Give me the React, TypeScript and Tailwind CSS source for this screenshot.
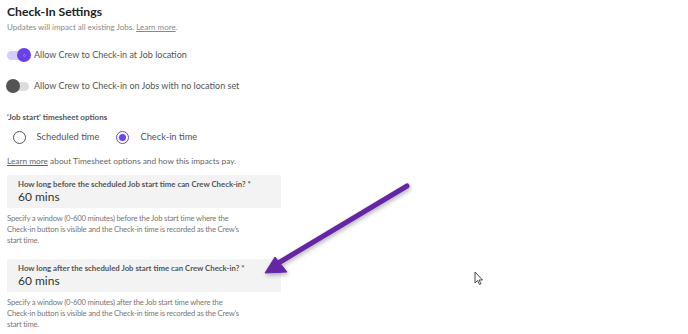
import React from 'react';

function Toggle({ on }: { on: boolean }) {
  return (
    <div className="relative w-[24px] h-[14px] shrink-0">
      <div
        className={`absolute left-0 right-[2px] top-[2.5px] h-[9px] rounded-full ${
          on ? 'bg-[#d8cdfa]' : 'bg-[#dcdcdc]'
        }`}
      />
      <div
        className={`absolute top-0 w-[14px] h-[14px] rounded-full flex items-center justify-center ${
          on ? 'left-[10px] bg-[#6a3ff0]' : 'left-[-1px] bg-[#545454]'
        }`}
      >
        {on && <div className="w-[3px] h-[3px] rounded-full border border-[#9d85f5]" />}
      </div>
    </div>
  );
}

function Radio({ checked, label }: { checked: boolean; label: string }) {
  return (
    <div className="flex items-center gap-[11px]">
      <div
        className={`w-[13px] h-[13px] rounded-full border-[1.5px] flex items-center justify-center ${
          checked ? 'border-[#6a46e6]' : 'border-[#555]'
        }`}
      >
        {checked && <div className="w-[7px] h-[7px] rounded-full bg-[#6a46e6]" />}
      </div>
      <span className="text-[9.3px] text-[#555] leading-[14px]">{label}</span>
    </div>
  );
}

function WindowField({ label, when }: { label: string; when: string }) {
  return (
    <div>
      <div className="w-[274px] h-[33px] bg-[#f3f3f3] pl-[11px] pt-[4px]">
        <div className="text-[7.8px] font-bold text-[#555] leading-[10px]">{label}</div>
        <div className="text-[12px] text-[#333] leading-[16px]">60 mins</div>
      </div>
      <p className="text-[7.7px] tracking-[-0.2px] text-[#777] leading-[11px] mt-[5px]">
        Specify a window (0-600 minutes) {when} the Job start time where the
        <br />
        Check-in button is visible and the Check-in time is recorded as the Crew’s
        <br />
        start time.
      </p>
    </div>
  );
}

export default function App() {
  return (
    <div
      className="relative w-[688px] h-[334px] bg-white overflow-hidden pl-[7px] pt-[3px]"
      style={{ fontFamily: 'Lato, "Noto Sans", sans-serif' }}
    >
      <h1 className="text-[12.2px] font-bold text-[#222] leading-[18px]">Check-In Settings</h1>
      <p className="text-[8px] text-[#888] leading-[12px]">
        Updates will impact all existing Jobs. <span className="underline">Learn more</span>.
      </p>

      <div className="flex items-center gap-[3px] mt-[15px] h-[14px]">
        <Toggle on />
        <span className="text-[9px] text-[#555]">Allow Crew to Check-in at Job location</span>
      </div>
      <div className="flex items-center gap-[3px] mt-[17px] h-[14px]">
        <Toggle on={false} />
        <span className="text-[9px] text-[#555]">Allow Crew to Check-in on Jobs with no location set</span>
      </div>

      <p className="text-[8px] font-bold text-[#555] mt-[18px] leading-[12px]">‘Job start’ timesheet options</p>
      <div className="flex items-center gap-[17px] mt-[7px] pl-[5.5px] h-[14px]">
        <Radio checked={false} label="Scheduled time" />
        <Radio checked label="Check-in time" />
      </div>
      <p className="text-[8.3px] text-[#666] mt-[11px] leading-[12px]">
        <span className="underline">Learn more</span> about Timesheet options and how this impacts pay.
      </p>

      <div className="mt-[8px] flex flex-col gap-[13px]">
        <WindowField label="How long before the scheduled Job start time can Crew Check-in? *" when="before" />
        <WindowField label="How long after the scheduled Job start time can Crew Check-in? *" when="after" />
      </div>

      <svg className="absolute left-0 top-0" width="688" height="334" viewBox="0 0 688 334">
        <defs>
          <filter id="sh" x="-20%" y="-20%" width="140%" height="140%">
            <feDropShadow dx="1" dy="2" stdDeviation="2" floodColor="#000" floodOpacity="0.3" />
          </filter>
        </defs>
        <g filter="url(#sh)" fill="#6526a6" stroke="#6526a6">
          <line x1="407" y1="186" x2="280" y2="262" strokeWidth="5" strokeLinecap="round" />
          <polygon points="265,273 275,257 287,272" strokeWidth="1" strokeLinejoin="round" />
        </g>
      </svg>

      <svg className="absolute left-[474px] top-[271px]" width="10" height="15" viewBox="0 0 10 15">
        <path d="M1 1 L1 12 L3.5 9.5 L5.5 13.5 L7 12.8 L5 9 L8.5 9 Z" fill="#fff" stroke="#333" strokeWidth="0.9" />
      </svg>
    </div>
  );
}
